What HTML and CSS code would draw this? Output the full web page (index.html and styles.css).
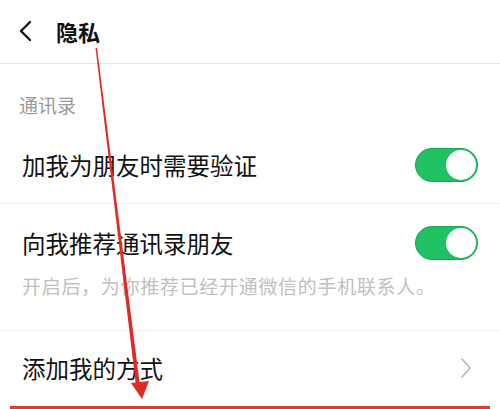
FILE: index.html
```html
<!DOCTYPE html>
<html lang="zh-CN">
<head>
<meta charset="utf-8">
<link rel="stylesheet" href="styles.css">
</head>
<body>
<div class="page">
  <header class="topbar">
    <svg class="back" width="16" height="22" viewBox="0 0 16 22"><path d="M12 2 L3 11 L12 20" fill="none" stroke="#111" stroke-width="2.4" stroke-linecap="round" stroke-linejoin="round"/></svg>
    <h1 class="title">隐私</h1>
  </header>
  <div class="section-label">通讯录</div>
  <div class="row row-first">
    <span class="row-text">加我为朋友时需要验证</span>
    <span class="switch"><span class="knob"></span></span>
  </div>
  <div class="row-group">
    <div class="row row-second">
      <span class="row-text">向我推荐通讯录朋友</span>
      <span class="switch"><span class="knob"></span></span>
    </div>
    <p class="desc">开启后，为你推荐已经开通微信的手机联系人。</p>
  </div>
  <div class="row row-link">
    <span class="row-text">添加我的方式</span>
    <svg class="chev" width="12" height="22" viewBox="0 0 12 22"><path d="M2 2 L10 11 L2 20" fill="none" stroke="#b8b8b8" stroke-width="1.6" stroke-linecap="round" stroke-linejoin="round"/></svg>
  </div>
  <div class="red-box"></div>
  <svg class="arrow" width="500" height="409" viewBox="0 0 500 409">
    <polygon points="95.5,48 97,48 140,386 136,386" fill="#e02a24"/>
    <polygon points="131,383 149,381 142,399" fill="#e02a24"/>
  </svg>
</div>
</body>
</html>
```
FILE: styles.css
```css
* { box-sizing: border-box; }
html, body { margin: 0; padding: 0; background: #fff; }
.page {
  position: relative;
  width: 500px;
  height: 409px;
  overflow: hidden;
  font-family: "Noto Sans CJK SC", "Noto Sans", sans-serif;
  color: #111;
}
.topbar {
  height: 64px;
  border-bottom: 1px solid #e4e4e4;
  display: flex;
  align-items: center;
  padding-left: 18px;
  padding-bottom: 2px;
}
.back { display: block; margin-right: 22px; }
.title {
  margin: 0;
  font-size: 22px;
  font-weight: 700;
  line-height: 30px;
}
.section-label {
  padding: 29px 0 11px 19px;
  font-size: 19px;
  line-height: 24px;
  color: #9a9a9a;
}
.row {
  display: flex;
  align-items: center;
  justify-content: space-between;
  padding-left: 22px;
  padding-right: 22px;
}
.row-text {
  font-size: 23.5px;
  line-height: 34px;
}
.row-first {
  padding-top: 20px;
  padding-bottom: 21px;
  border-bottom: 1px solid #efefef;
}
.row-group {
  padding-top: 22px;
  padding-bottom: 34px;
  border-bottom: 1px solid #f1f1f1;
}
.desc {
  margin: 16px 0 0 22px;
  font-size: 19px;
  line-height: 20px;
  letter-spacing: 0.7px;
  color: #c0c0c0;
}
.row-link {
  padding-top: 20px;
  padding-right: 28px;
}
.switch {
  position: relative;
  display: block;
  width: 63px;
  height: 34px;
  border-radius: 17px;
  background: #1fc163;
  border: 1px solid #17a553;
}
.knob {
  position: absolute;
  right: 1px;
  top: 1px;
  width: 30px;
  height: 30px;
  border-radius: 50%;
  background: #fff;
}
.chev { display: block; }
.red-box {
  position: absolute;
  left: 10px;
  top: 406px;
  width: 480px;
  height: 10px;
  border: 3px solid #d93a36;
}
.arrow {
  position: absolute;
  left: 0;
  top: 0;
  pointer-events: none;
}
```
